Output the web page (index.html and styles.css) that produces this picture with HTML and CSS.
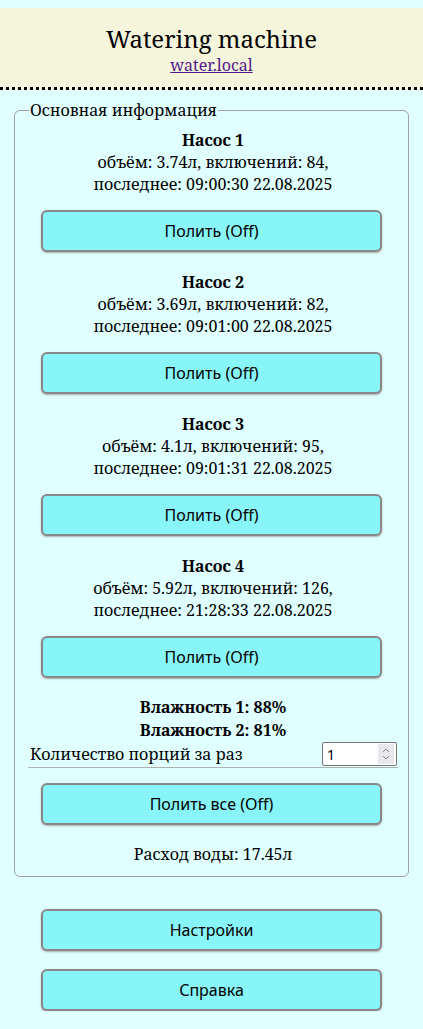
FILE: index.html
```html
<!DOCTYPE html>
<html lang="ru">
<head>
<meta charset="utf-8">
<title>Watering machine</title>
<link rel="stylesheet" href="styles.css">
</head>
<body>
<header class="header">
  <div class="title">Watering machine</div>
  <a class="host" href="#">water.local</a>
</header>
<main class="main">
  <fieldset class="info">
    <legend class="legend">Основная информация</legend>
    <section class="pump">
      <div class="pump-name">Насос 1</div>
      <div class="pump-line">объём: 3.74л, включений: 84,</div>
      <div class="pump-line">последнее: 09:00:30 22.08.2025</div>
      <button class="btn">Полить (Off)</button>
    </section>
    <section class="pump">
      <div class="pump-name">Насос 2</div>
      <div class="pump-line">объём: 3.69л, включений: 82,</div>
      <div class="pump-line">последнее: 09:01:00 22.08.2025</div>
      <button class="btn">Полить (Off)</button>
    </section>
    <section class="pump">
      <div class="pump-name">Насос 3</div>
      <div class="pump-line">объём: 4.1л, включений: 95,</div>
      <div class="pump-line">последнее: 09:01:31 22.08.2025</div>
      <button class="btn">Полить (Off)</button>
    </section>
    <section class="pump">
      <div class="pump-name">Насос 4</div>
      <div class="pump-line">объём: 5.92л, включений: 126,</div>
      <div class="pump-line">последнее: 21:28:33 22.08.2025</div>
      <button class="btn">Полить (Off)</button>
    </section>
    <div class="sensors">
      <div class="humidity">Влажность 1: 88%</div>
      <div class="humidity">Влажность 2: 81%</div>
    </div>
    <div class="portions">
      <span class="portions-label">Количество порций за раз</span>
      <span class="num">
        <span class="num-value">1</span>
        <span class="spin">
          <svg width="10" height="16" viewBox="0 0 10 16"><path d="M2 6 L5 3 L8 6" fill="none" stroke="#888" stroke-width="1"/><path d="M2 10 L5 13 L8 10" fill="none" stroke="#888" stroke-width="1"/></svg>
        </span>
      </span>
    </div>
    <button class="btn btn-all">Полить все (Off)</button>
    <div class="usage">Расход воды: 17.45л</div>
  </fieldset>
  <button class="btn btn-nav">Настройки</button>
  <button class="btn btn-nav">Справка</button>
</main>
</body>
</html>
```
FILE: styles.css
```css
html, body {
  margin: 0;
  padding: 0;
}
body {
  background: #e0ffff;
  font-family: "Noto Serif", "Liberation Serif", serif;
  font-size: 16px;
  color: #000;
  padding-top: 8px;
}
.header {
  background: #f5f5dc;
  text-align: center;
  padding: 16px 0 11px;
  border-bottom: 3px dotted #000;
}
.title {
  font-size: 24px;
  line-height: 30px;
}
.host {
  display: inline-block;
  font-size: 16px;
  line-height: 20px;
  color: #551a8b;
}
.main {
  padding: 10px 14px 0;
}
.info {
  margin: 0;
  border: 1px solid #a0a0a0;
  border-radius: 6px;
  padding: 3px 10px 11px 13px;
  text-align: center;
}
.legend {
  padding: 0 1px;
  margin-left: 1px;
  line-height: 20px;
  text-align: left;
}
.pump {
  padding-top: 6px;
}
.pump-name {
  font-weight: bold;
  line-height: 22px;
}
.pump-line {
  line-height: 22px;
}
.btn {
  display: block;
  width: 341px;
  height: 42px;
  margin: 15px auto 13px;
  background: #88f6f9;
  border: 2px solid #888;
  border-radius: 6px;
  box-shadow: 0 1px 2px #aaa;
  font-family: "Noto Sans", sans-serif;
  font-size: 16px;
  color: #000;
}
.info .btn {
  margin-left: 13px;
  margin-right: 0;
}
.sensors {
  padding-top: 5px;
}
.humidity {
  font-weight: bold;
  line-height: 23px;
}
.portions {
  display: flex;
  align-items: center;
  justify-content: space-between;
  border-bottom: 1px solid #b0b0b0;
  padding: 0 1px 1px 2px;
  text-align: left;
}
.portions-label {
  line-height: 23px;
}
.num {
  display: flex;
  align-items: center;
  width: 75px;
  height: 24px;
  border: 1px solid #767676;
  border-radius: 2px;
  background: #fff;
  font-family: "Noto Sans", sans-serif;
  font-size: 14px;
  box-sizing: border-box;
  padding-left: 4px;
}
.num-value {
  flex: 1;
}
.spin {
  display: flex;
  align-items: center;
  justify-content: center;
  width: 16px;
  height: 20px;
  margin-right: 2px;
  background: #e8e8ee;
}
.info .btn-all {
  margin-top: 15px;
  margin-bottom: 18px;
}
.usage {
  line-height: 22px;
}
.btn-nav {
  margin-top: 32px;
  margin-bottom: 0;
}
.btn-nav + .btn-nav {
  margin-top: 18px;
}
```
